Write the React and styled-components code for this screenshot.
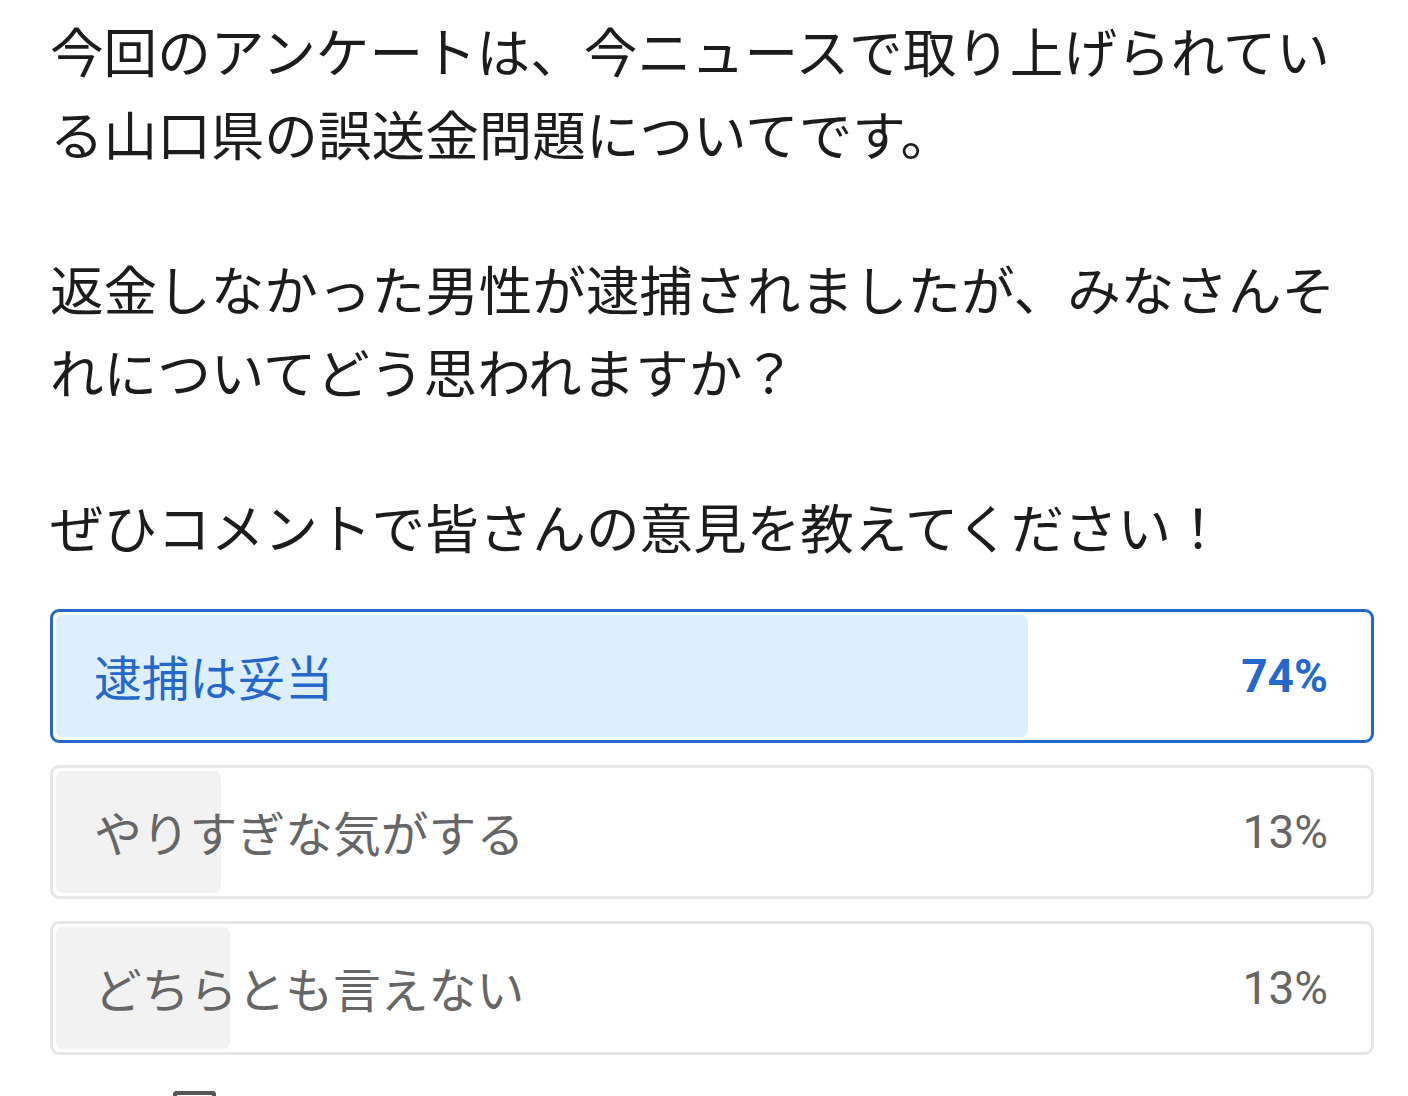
import React from "react";
import styled, { createGlobalStyle } from "styled-components";

const Global = createGlobalStyle`
  html, body { margin: 0; padding: 0; background: #fff; }
  body { font-family: "Noto Sans CJK JP", "Noto Sans", sans-serif; color: #1a1a1a; }
`;

const Page = styled.div`
  padding: 8px 34px 0 50px;
  height: 1096px;
  box-sizing: border-box;
  overflow: hidden;
`;

const Para = styled.p`
  margin: 0 0 72px;
  font-size: 53.6px;
  line-height: 83px;
  color: #1c1c1c;
  &:last-of-type { margin-bottom: 0; }
`;

const Poll = styled.div`
  margin-top: 42px;
  display: flex;
  flex-direction: column;
  gap: 22px;
`;

const Option = styled.div`
  height: 134px;
  box-sizing: border-box;
  border: 3px solid ${(p) => (p.$selected ? "#2468cc" : "#e6e6e6")};
  border-radius: 9px;
  padding: 3px;
  background: #fff;
`;

const Track = styled.div`
  position: relative;
  height: 100%;
  border-radius: 7px;
`;

const Fill = styled.div`
  position: absolute;
  left: 0;
  top: 0;
  bottom: 0;
  border-radius: 7px;
  background: ${(p) => (p.$selected ? "#ddeefc" : "#f2f2f2")};
`;

const Content = styled.div`
  position: relative;
  height: 100%;
  display: flex;
  align-items: center;
  justify-content: space-between;
  padding: 0 40px 0 38px;
`;

const Label = styled.span`
  font-size: 47.8px;
  color: ${(p) => (p.$selected ? "#2468cc" : "#666")};
  line-height: 1;
`;

const Pct = styled.span`
  font-family: Roboto, "Noto Sans", sans-serif;
  font-size: 46px;
  font-weight: ${(p) => (p.$selected ? 700 : 400)};
  color: ${(p) => (p.$selected ? "#2468cc" : "#666")};
  line-height: 1;
`;

const Footer = styled.div`
  margin-top: 36px;
  padding-left: 123px;
`;

const FooterIcon = styled.div`
  width: 43px;
  height: 20px;
  border-top: 4px solid #555;
  border-left: 4px solid #555;
  border-right: 4px solid #555;
  border-radius: 4px 4px 0 0;
  box-sizing: border-box;
`;

const options = [
  { label: "逮捕は妥当", pct: 74, width: 74.1, selected: true },
  { label: "やりすぎな気がする", pct: 13, width: 12.6 },
  { label: "どちらとも言えない", pct: 13, width: 13.3 },
];

export default function App() {
  return (
    <>
      <Global />
      <Page>
        <Para>今回のアンケートは、今ニュースで取り上げられている山口県の誤送金問題についてです。</Para>
        <Para>返金しなかった男性が逮捕されましたが、みなさんそれについてどう思われますか？</Para>
        <Para>ぜひコメントで皆さんの意見を教えてください！</Para>
        <Poll>
          {options.map((o) => (
            <Option key={o.label} $selected={o.selected}>
              <Track>
                <Fill $selected={o.selected} style={{ width: `${o.width}%` }} />
                <Content>
                  <Label $selected={o.selected}>{o.label}</Label>
                  <Pct $selected={o.selected}>{o.pct}%</Pct>
                </Content>
              </Track>
            </Option>
          ))}
        </Poll>
        <Footer>
          <FooterIcon />
        </Footer>
      </Page>
    </>
  );
}
